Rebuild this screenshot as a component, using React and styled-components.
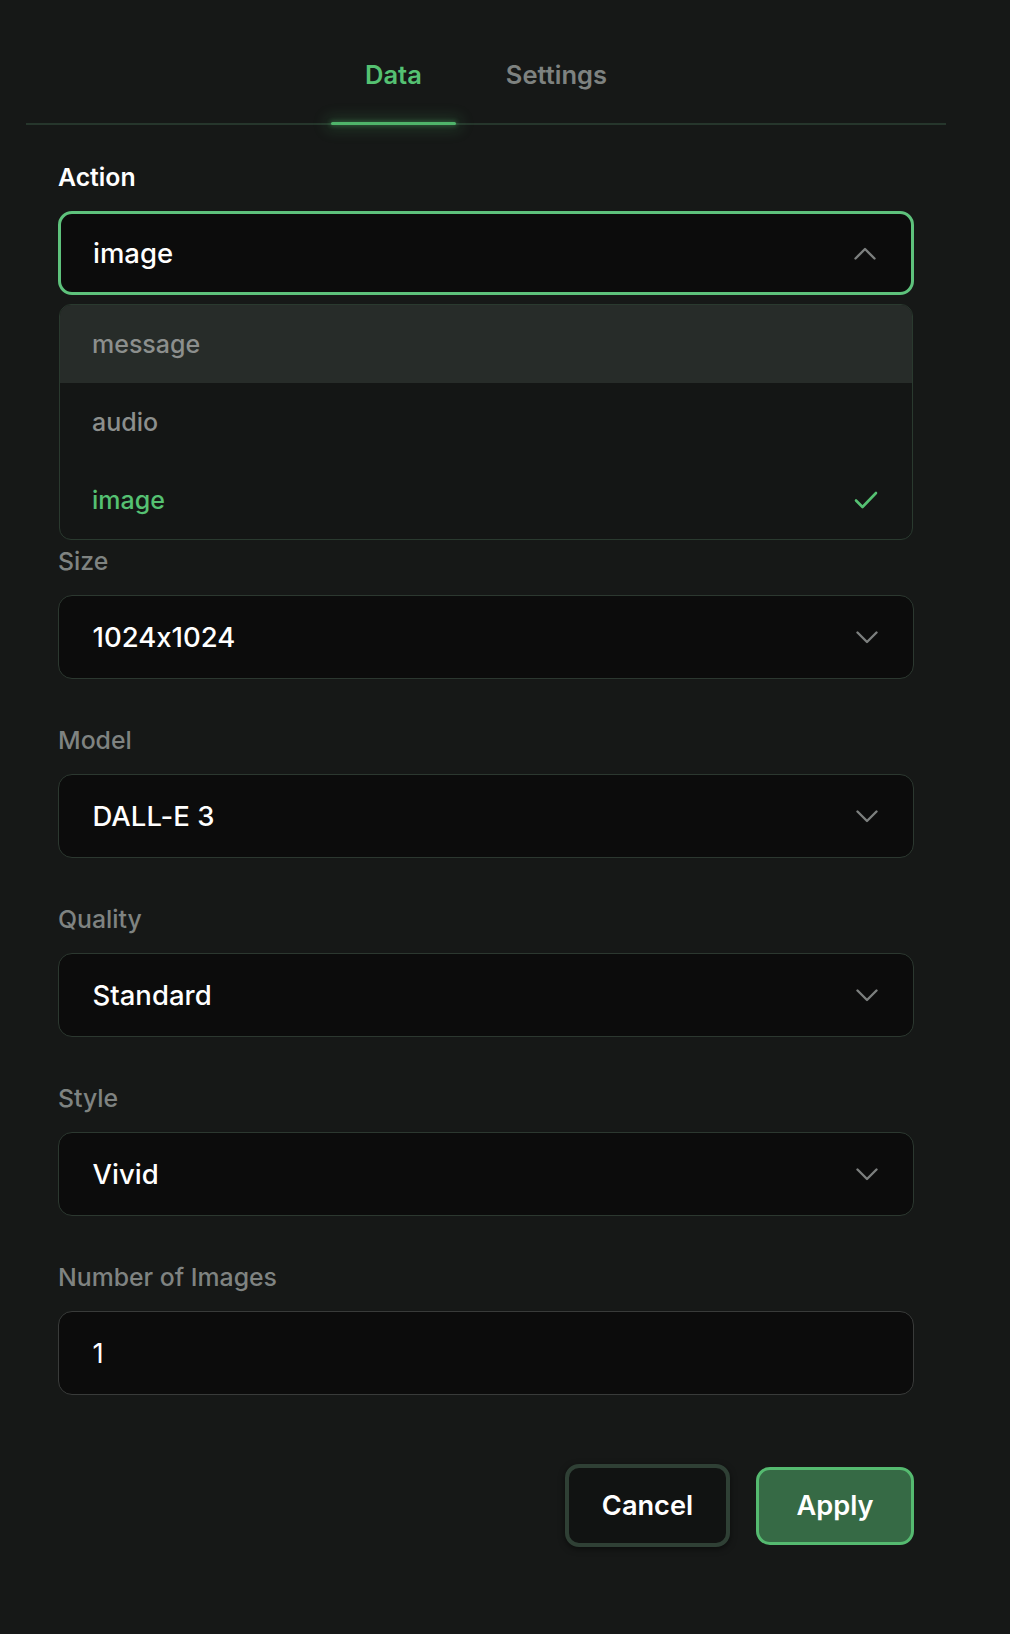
import React from "react";
import styled, { createGlobalStyle, css } from "styled-components";

const Global = createGlobalStyle`
  html, body { margin: 0; padding: 0; background: #161817; }
  body {
    font-family: Inter, "Noto Sans", "Liberation Sans", sans-serif;
    font-feature-settings: "calt" 0;
    -webkit-font-smoothing: antialiased;
  }
  * { box-sizing: border-box; }
`;

const Page = styled.div`
  min-height: 1634px;
  background: #161817;
  padding: 42px 0 0 26px;
`;

const Panel = styled.div`
  width: 920px;
`;

const TabBar = styled.div`
  display: flex;
  justify-content: center;
  gap: 16px;
  border-bottom: 2px solid #26362c;
`;

const Tab = styled.div`
  position: relative;
  padding: 18px 34px 33px;
  font-size: 25.5px;
  line-height: 30px;
  font-weight: 600;
  color: ${(p) => (p.$active ? "#55c172" : "#7e8280")};
  ${(p) =>
    p.$active &&
    css`
      &::after {
        content: "";
        position: absolute;
        left: 0;
        right: 0;
        bottom: -2px;
        height: 3px;
        border-radius: 2px;
        background: #4fb46a;
        box-shadow: 0 0 14px 6px rgba(79, 180, 106, 0.16), 0 0 4px 1px rgba(79, 180, 106, 0.35);
      }
    `}
`;

const Form = styled.div`
  display: flex;
  flex-direction: column;
  gap: 47px;
  padding: 38px 32px 0;
`;

const Field = styled.div`
  display: flex;
  flex-direction: column;
  gap: 20px;
`;

const Label = styled.div`
  font-size: 24.8px;
  line-height: 28px;
  font-weight: ${(p) => (p.$strong ? 600 : 500)};
  color: ${(p) => (p.$strong ? "#ffffff" : "#7f8381")};
`;

const Trigger = styled.div`
  height: 84px;
  display: flex;
  align-items: center;
  justify-content: space-between;
  background: #0c0c0c;
  border-radius: 14px;
  border: ${(p) => (p.$open ? "3px solid #5ec27c" : "1.5px solid #2c3830")};
  padding: 0 35px 0 ${(p) => (p.$open ? 32 : 33.5)}px;
  color: #ffffff;
  font-size: 27.5px;
  font-weight: 500;
`;

const NumberBox = styled.div`
  height: 84px;
  display: flex;
  align-items: center;
  background: #0c0c0c;
  border-radius: 14px;
  border: 1.5px solid #393b3a;
  padding: 0 33.5px;
  color: #ffffff;
  font-size: 27.5px;
  font-weight: 400;
`;

const Menu = styled.div`
  margin: -11px 1px -40px;
  background: #141615;
  border: 1.5px solid #2a3a2f;
  border-radius: 12px;
  overflow: hidden;
`;

const Option = styled.div`
  height: 78px;
  display: flex;
  align-items: center;
  justify-content: space-between;
  padding: 0 34px 0 32px;
  font-size: 25px;
  font-weight: 500;
  background: ${(p) => (p.$highlight ? "#272c29" : "transparent")};
  color: ${(p) => (p.$selected ? "#55c172" : "#8c8f8d")};
`;

const Actions = styled.div`
  display: flex;
  justify-content: flex-end;
  align-items: center;
  gap: 26px;
  margin-top: 22px;
`;

const Button = styled.button`
  font-family: inherit;
  font-size: 27.2px;
  font-weight: 600;
  color: #ffffff;
  border-radius: 14px;
  cursor: pointer;
  ${(p) =>
    p.$primary
      ? css`
          width: 158px;
          height: 78px;
          background: #366a45;
          border: 3px solid #55ba70;
        `
      : css`
          width: 165px;
          height: 83px;
          background: #111312;
          border: 4.5px solid #2f4035;
          box-shadow: 0 2px 6px rgba(0, 0, 0, 0.5);
        `}
`;

const Chevron = ({ up }) => (
  <svg width="22" height="13" viewBox="0 0 22 13" fill="none">
    <path
      d={up ? "M1.5 11.5 L11 2 L20.5 11.5" : "M1.5 1.5 L11 11 L20.5 1.5"}
      stroke="#7c7f7e"
      strokeWidth="2.4"
      strokeLinecap="round"
      strokeLinejoin="round"
    />
  </svg>
);

const Check = () => (
  <svg width="24" height="18" viewBox="0 0 24 18" fill="none">
    <path d="M2 9.5 L8.5 16 L22 2" stroke="#55c172" strokeWidth="2.6" strokeLinecap="round" strokeLinejoin="round" />
  </svg>
);

const selects = [
  { label: "Size", value: "1024x1024" },
  { label: "Model", value: "DALL-E 3" },
  { label: "Quality", value: "Standard" },
  { label: "Style", value: "Vivid" },
];

const options = ["message", "audio", "image"];

export default function App() {
  return (
    <>
      <Global />
      <Page>
        <Panel>
          <TabBar>
            <Tab $active>Data</Tab>
            <Tab>Settings</Tab>
          </TabBar>
          <Form>
            <Field>
              <Label $strong>Action</Label>
              <Trigger $open>
                <span>image</span>
                <Chevron up />
              </Trigger>
              <Menu>
                {options.map((o, i) => (
                  <Option key={o} $highlight={i === 0} $selected={o === "image"}>
                    <span>{o}</span>
                    {o === "image" && <Check />}
                  </Option>
                ))}
              </Menu>
            </Field>
            {selects.map((s) => (
              <Field key={s.label}>
                <Label>{s.label}</Label>
                <Trigger>
                  <span>{s.value}</span>
                  <Chevron />
                </Trigger>
              </Field>
            ))}
            <Field>
              <Label>Number of Images</Label>
              <NumberBox>1</NumberBox>
            </Field>
            <Actions>
              <Button>Cancel</Button>
              <Button $primary>Apply</Button>
            </Actions>
          </Form>
        </Panel>
      </Page>
    </>
  );
}
